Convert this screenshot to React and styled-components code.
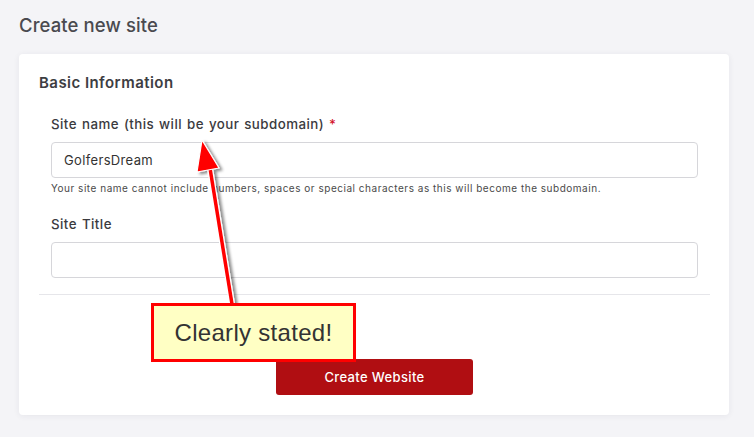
import React from "react";
import styled, { createGlobalStyle } from "styled-components";

const GlobalStyle = createGlobalStyle`
  html, body {
    margin: 0;
    padding: 0;
    background: #f4f4f7;
    font-family: "Inter", "Noto Sans", sans-serif;
    color: #444;
  }
  * { box-sizing: border-box; }
`;

function App() {
  return (
    <Page>
      <GlobalStyle />
      <PageTitle>Create new site</PageTitle>
      <Card>
        <SectionTitle>Basic Information</SectionTitle>
        <FormBody>
          <Field>
            <Label>
              Site name (this will be your subdomain) <Required>*</Required>
            </Label>
            <Input defaultValue="GolfersDream" />
            <Help>
              Your site name cannot include numbers, spaces or special characters as this will become the subdomain.
            </Help>
          </Field>
          <Field>
            <Label>Site Title</Label>
            <Input />
          </Field>
        </FormBody>
        <Divider />
        <Footer>
          <SubmitButton>Create Website</SubmitButton>
        </Footer>
      </Card>

      <ArrowLayer width="754" height="437" viewBox="0 0 754 437">
        <defs>
          <filter id="shadow" x="-50%" y="-50%" width="200%" height="200%">
            <feDropShadow dx="3" dy="2" stdDeviation="1.5" floodColor="#000" floodOpacity="0.45" />
          </filter>
        </defs>
        <g filter="url(#shadow)">
          <line x1="232" y1="304" x2="209" y2="162" stroke="#fff" strokeWidth="6" />
          <line x1="232" y1="304" x2="209" y2="162" stroke="#f00" strokeWidth="3.5" />
          <polygon points="202,140 219,168 197,172" fill="#f00" stroke="#fff" strokeWidth="1.2" strokeLinejoin="round" />
        </g>
      </ArrowLayer>
      <Callout>Clearly stated!</Callout>
    </Page>
  );
}

const Page = styled.div`
  position: relative;
  width: 754px;
  height: 437px;
  padding: 13px 25px 0 19px;
  overflow: hidden;
`;

const PageTitle = styled.h1`
  margin: 0 0 17px;
  font-size: 18.5px;
  font-weight: 500;
  line-height: 24px;
  color: #4a4a4f;
  letter-spacing: 0.1px;
`;

const Card = styled.div`
  width: 710px;
  background: #fff;
  border-radius: 4px;
  box-shadow: 0 1px 6px rgba(40, 40, 70, 0.07);
  padding: 19px 19px 20px 20px;
`;

const SectionTitle = styled.h2`
  margin: 0 0 22px;
  font-size: 15px;
  font-weight: 600;
  line-height: 20px;
  color: #3d3d42;
  letter-spacing: 0.45px;
`;

const FormBody = styled.div`
  display: flex;
  flex-direction: column;
  gap: 20px;
  padding: 0 12px 16px;
`;

const Field = styled.div`
  display: flex;
  flex-direction: column;
`;

const Label = styled.label`
  font-size: 13.3px;
  font-weight: 500;
  line-height: 18px;
  color: #3a3a3e;
  margin-bottom: 9px;
  letter-spacing: 0.45px;
  word-spacing: 1px;
`;

const Required = styled.span`
  color: #d3122a;
`;

const Input = styled.input`
  height: 36px;
  width: 100%;
  border: 1px solid #d6d6da;
  border-radius: 4px;
  padding: 0 12px;
  font-family: inherit;
  font-size: 13px;
  letter-spacing: 0.35px;
  color: #333;
  background: #fff;
  outline: none;
`;

const Help = styled.div`
  margin-top: 3px;
  font-size: 10px;
  line-height: 14px;
  color: #4a4a4a;
  letter-spacing: 0.52px;
  white-space: nowrap;
`;

const Divider = styled.hr`
  margin: 0;
  border: 0;
  border-top: 1px solid #e6e6ea;
`;

const Footer = styled.div`
  display: flex;
  justify-content: center;
  padding-top: 64px;
`;

const SubmitButton = styled.button`
  width: 197px;
  height: 36px;
  border: 0;
  border-radius: 3px;
  background: #b00e12;
  color: #fff;
  font-family: inherit;
  font-size: 13px;
  font-weight: 500;
  letter-spacing: 0.35px;
  cursor: pointer;
`;

const ArrowLayer = styled.svg`
  position: absolute;
  left: 0;
  top: 0;
  pointer-events: none;
`;

const Callout = styled.div`
  position: absolute;
  left: 151px;
  top: 303px;
  width: 205px;
  height: 59px;
  border: 3px solid #f00;
  background: #ffffc4;
  display: flex;
  align-items: center;
  justify-content: center;
  font-family: "Liberation Sans", Arial, sans-serif;
  font-size: 24px;
  color: #333;
  letter-spacing: 0.3px;
`;

export default App;
